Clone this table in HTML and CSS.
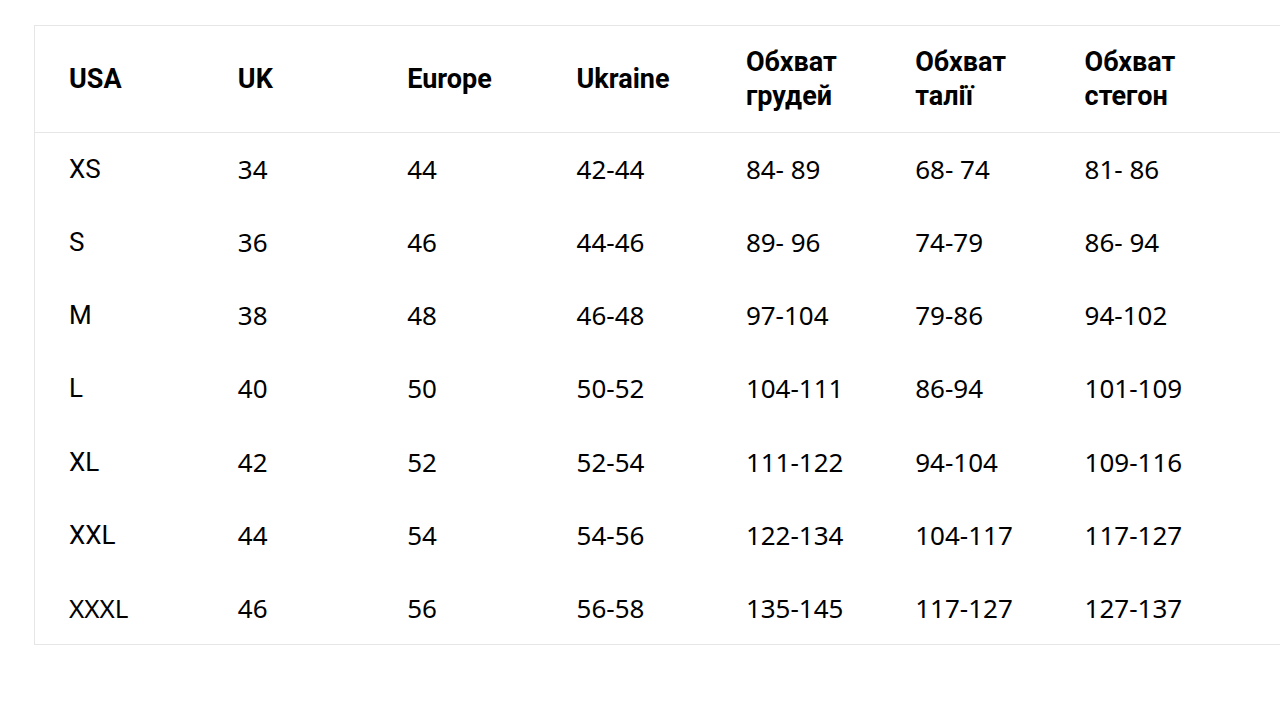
FILE: index.html
```html
<!DOCTYPE html>
<html lang="uk">
<head>
<meta charset="utf-8">
<link rel="stylesheet" href="styles.css">
</head>
<body>
<div class="wrap">
<table class="sizes">
  <colgroup>
    <col class="c"><col class="c"><col class="c"><col class="c"><col class="c"><col class="c"><col class="last">
  </colgroup>
  <thead>
    <tr><th>USA</th><th>UK</th><th>Europe</th><th>Ukraine</th><th>Обхват<br>грудей</th><th>Обхват<br>талії</th><th>Обхват<br>стегон</th></tr>
  </thead>
  <tbody>
    <tr><td class="sz">XS</td><td>34</td><td>44</td><td>42-44</td><td>84- 89</td><td>68- 74</td><td>81- 86</td></tr>
    <tr><td class="sz">S</td><td>36</td><td>46</td><td>44-46</td><td>89- 96</td><td>74-79</td><td>86- 94</td></tr>
    <tr><td class="sz">M</td><td>38</td><td>48</td><td>46-48</td><td>97-104</td><td>79-86</td><td>94-102</td></tr>
    <tr><td class="sz">L</td><td>40</td><td>50</td><td>50-52</td><td>104-111</td><td>86-94</td><td>101-109</td></tr>
    <tr><td class="sz">XL</td><td>42</td><td>52</td><td>52-54</td><td>111-122</td><td>94-104</td><td>109-116</td></tr>
    <tr><td class="sz">XXL</td><td>44</td><td>54</td><td>54-56</td><td>122-134</td><td>104-117</td><td>117-127</td></tr>
    <tr><td>XXXL</td><td>46</td><td>56</td><td>56-58</td><td>135-145</td><td>117-127</td><td>127-137</td></tr>
  </tbody>
</table>
</div>
</body>
</html>
```
FILE: styles.css
```css
html, body {
  margin: 0;
  padding: 0;
  background: #fff;
  overflow: hidden;
}
.wrap {
  padding: 25px 0 0 34px;
  width: 1400px;
}
.sizes {
  border-collapse: collapse;
  table-layout: fixed;
  width: 1320px;
  border: 1px solid #e6e6e6;
  color: #000;
}
.sizes col.c { width: 169.35px; }
.sizes th {
  font-family: Roboto, "Noto Sans", sans-serif;
  font-weight: 700;
  font-size: 27px;
  line-height: 34px;
  text-align: left;
  vertical-align: middle;
  height: 107px;
  padding: 0 10px 0 34px;
  border-bottom: 1px solid #e6e6e6;
  box-sizing: border-box;
}
.sizes td {
  font-family: "Noto Sans", sans-serif;
  font-size: 26px;
  font-weight: 400;
  line-height: 34px;
  height: 73.15px;
  padding: 0 10px 0 34px;
  vertical-align: middle;
  box-sizing: border-box;
}
.sizes td.sz {
  font-family: Roboto, "Noto Sans", sans-serif;
  font-size: 26px;
}
```
